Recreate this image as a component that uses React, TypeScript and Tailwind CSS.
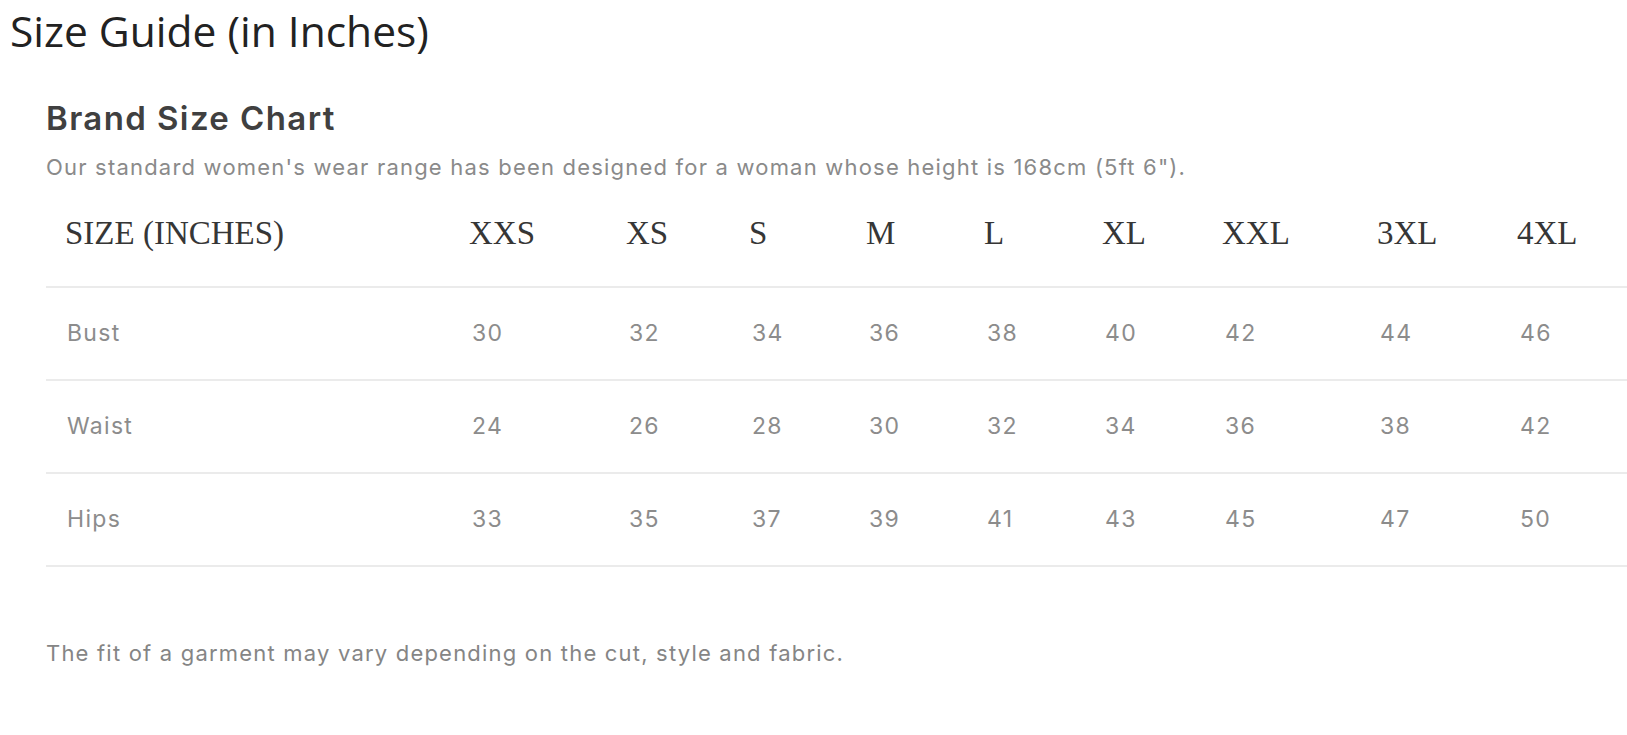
import React from "react";

const sizes = ["XXS", "XS", "S", "M", "L", "XL", "XXL", "3XL", "4XL"];
const rows: { label: string; values: string[] }[] = [
  { label: "Bust", values: ["30", "32", "34", "36", "38", "40", "42", "44", "46"] },
  { label: "Waist", values: ["24", "26", "28", "30", "32", "34", "36", "38", "42"] },
  { label: "Hips", values: ["33", "35", "37", "39", "41", "43", "45", "47", "50"] },
];

const gridCls =
  "grid grid-cols-[423px_157px_123px_117px_118px_118px_120px_155px_140px_1fr] items-center";

export default function App() {
  return (
    <div className="w-[1627px] h-[735px] bg-white overflow-hidden">
      <div className="pt-[2px] h-[59px] pl-[10px] text-[42.5px] leading-[57px] text-[#222222] font-['Open_Sans',sans-serif]">
        Size Guide (in Inches)
      </div>
      <div className="pl-[46px] font-['Inter',sans-serif]">
        <h2 className="mt-[41px] h-[36px] text-[33px] leading-[36px] tracking-[1.4px] font-semibold text-[#404040]">
          Brand Size Chart
        </h2>
        <p className="mt-[17px] h-[28px] text-[22px] leading-[28px] tracking-[1.2px] text-[#8a8a8a]">
          Our standard women's wear range has been designed for a woman whose height is 168cm (5ft 6").
        </p>
        <div className={`${gridCls} h-[107px] border-b-2 border-[#ebebeb] text-[33px] text-[#363636] font-['Liberation_Serif',serif]`}>
          <div className="pl-[19px]">SIZE (INCHES)</div>
          {sizes.map((s) => (
            <div key={s}>{s}</div>
          ))}
        </div>
        {rows.map((r) => (
          <div
            key={r.label}
            className={`${gridCls} h-[93px] border-b-2 border-[#ebebeb] text-[23px] tracking-[1.3px] text-[#8c8c8c]`}
          >
            <div className="pl-[21px]">{r.label}</div>
            {r.values.map((v, i) => (
              <div key={i} className="pl-[3px]">
                {v}
              </div>
            ))}
          </div>
        ))}
        <p className="mt-[72px] h-[28px] text-[22px] leading-[28px] tracking-[1.2px] text-[#858585]">
          The fit of a garment may vary depending on the cut, style and fabric.
        </p>
      </div>
    </div>
  );
}
